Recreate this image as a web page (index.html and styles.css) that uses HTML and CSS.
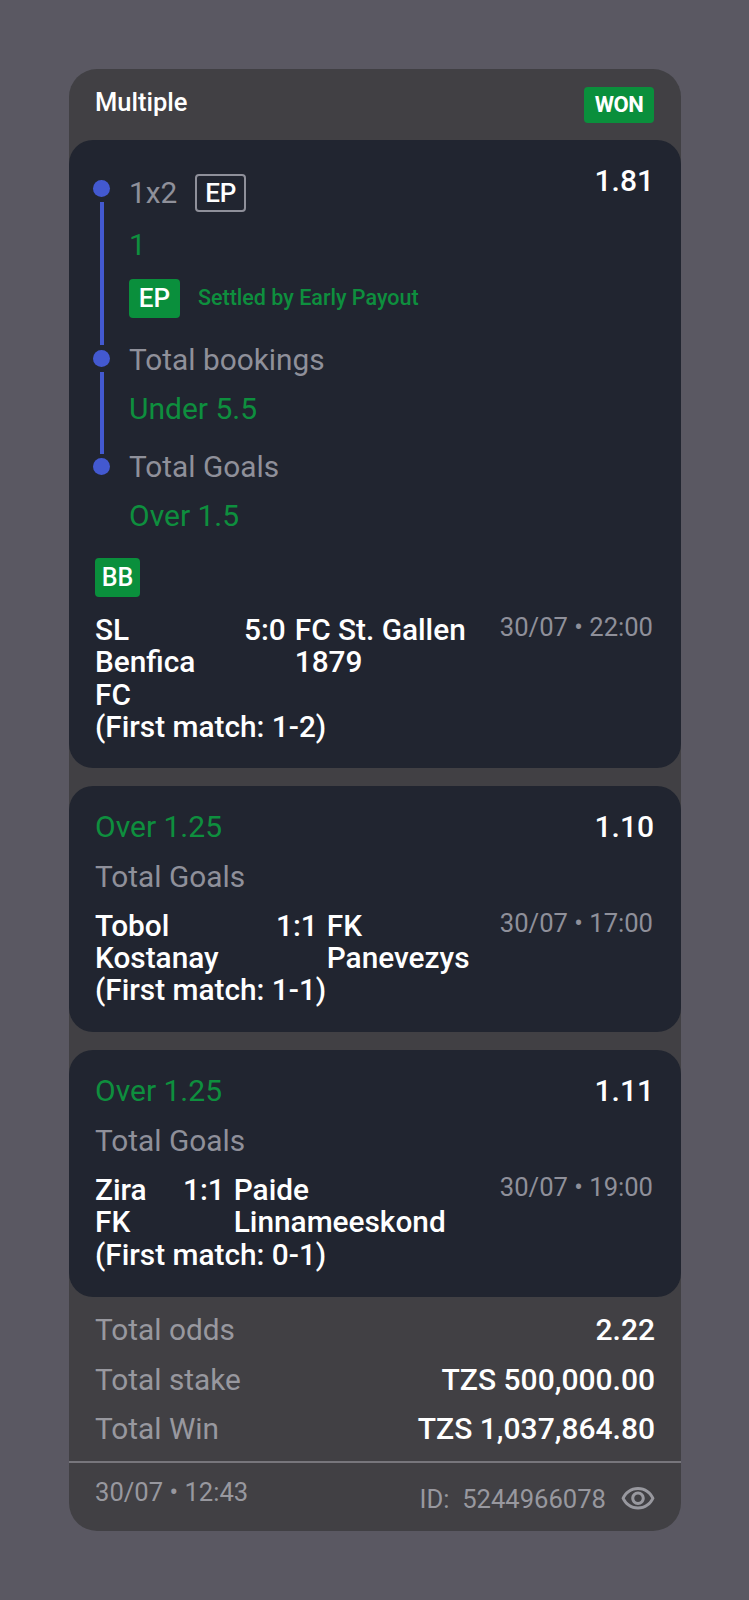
FILE: index.html
```html
<!DOCTYPE html>
<html lang="en">
<head>
    <meta charset="UTF-8">
    <meta name="viewport" content="width=device-width, initial-scale=1.0">
    <title>Multiple</title>
    <link rel="stylesheet" href="styles.css">
</head>
<body>
    <div class="ticket">
        <div class="ticket-head">
            <div class="ticket-title">Multiple</div>
            <div class="status">WON</div>
        </div>

        <div class="bets">
            <!-- Bet builder -->
            <div class="bet bet-builder">
                <div class="bet-top">
                    <div class="legs">
                        <div class="leg">
                            <div class="rail"><span class="dot"></span><span class="line line-first"></span></div>
                            <div class="leg-body">
                                <div class="market market-row">1x2 <span class="tag-outline">EP</span></div>
                                <div class="pick pick-first">1</div>
                                <div class="early">
                                    <span class="tag tag-ep">EP</span>
                                    <span class="early-text">Settled by Early Payout</span>
                                </div>
                            </div>
                        </div>
                        <div class="leg">
                            <div class="rail"><span class="dot"></span><span class="line"></span></div>
                            <div class="leg-body">
                                <div class="market">Total bookings</div>
                                <div class="pick">Under 5.5</div>
                            </div>
                        </div>
                        <div class="leg">
                            <div class="rail rail-last"><span class="dot"></span></div>
                            <div class="leg-body">
                                <div class="market">Total Goals</div>
                                <div class="pick">Over 1.5</div>
                            </div>
                        </div>
                    </div>
                    <div class="odds">1.81</div>
                </div>
                <span class="tag tag-bb">BB</span>
                <div class="match">
                    <div class="match-info">
                        <div class="teams">
                            <div class="home home-benfica"><span class="team">SL Benfica FC</span></div>
                            <div class="score">5:0</div>
                            <div class="team team-wide">FC St. Gallen 1879</div>
                        </div>
                        <div>(First match: 1-2)</div>
                    </div>
                    <div class="date">30/07 • 22:00</div>
                </div>
            </div>

            <div class="bet">
                <div class="bet-top">
                    <div class="pick pick-plain">Over 1.25</div>
                    <div class="odds">1.10</div>
                </div>
                <div class="market market-sub">Total Goals</div>
                <div class="match">
                    <div class="match-info">
                        <div class="teams">
                            <div class="home home-tobol"><span class="team">Tobol Kostanay</span></div>
                            <div class="score">1:1</div>
                            <div class="team">FK Panevezys</div>
                        </div>
                        <div>(First match: 1-1)</div>
                    </div>
                    <div class="date">30/07 • 17:00</div>
                </div>
            </div>

            <div class="bet">
                <div class="bet-top">
                    <div class="pick pick-plain">Over 1.25</div>
                    <div class="odds">1.11</div>
                </div>
                <div class="market market-sub">Total Goals</div>
                <div class="match">
                    <div class="match-info">
                        <div class="teams">
                            <div class="home home-zira"><span class="team">Zira FK</span></div>
                            <div class="score">1:1</div>
                            <div class="team">Paide Linnameeskond</div>
                        </div>
                        <div>(First match: 0-1)</div>
                    </div>
                    <div class="date">30/07 • 19:00</div>
                </div>
            </div>
        </div>

        <div class="totals">
            <div class="total-row"><span class="market">Total odds</span><span class="total-value">2.22</span></div>
            <div class="total-row"><span class="market">Total stake</span><span class="total-value">TZS 500,000.00</span></div>
            <div class="total-row"><span class="market">Total Win</span><span class="total-value">TZS 1,037,864.80</span></div>
        </div>

        <div class="ticket-foot">
            <div class="foot-date">30/07 • 12:43</div>
            <div class="foot-id">
                <span>ID:&nbsp; 5244966078</span>
                <svg class="eye" viewBox="0 0 24 24" width="36" height="36" fill="currentColor">
                    <path d="M12 6c3.79 0 7.17 2.13 8.82 5.5C19.17 14.87 15.79 17 12 17s-7.17-2.13-8.82-5.5C4.83 8.13 8.21 6 12 6m0-2C7 4 2.73 7.11 1 11.5 2.73 15.89 7 19 12 19s9.27-3.11 11-7.5C21.27 7.11 17 4 12 4zm0 5c1.38 0 2.5 1.12 2.5 2.5S13.38 14 12 14s-2.5-1.12-2.5-2.5S10.62 9 12 9m0-2c-2.48 0-4.5 2.02-4.5 4.5S9.52 16 12 16s4.5-2.02 4.5-4.5S14.48 7 12 7z"/>
                </svg>
            </div>
        </div>
    </div>
</body>
</html>
```

FILE: styles.css
```css
body {
    margin: 0;
    padding: 69px 68px 69px 69px;
    background-color: #5a5862;
    font-family: Roboto, "Liberation Sans", sans-serif;
    color: #fff;
}
.ticket {
    background: #414044;
    border-radius: 28px;
    overflow: hidden;
}
.ticket-head {
    display: flex;
    justify-content: space-between;
    align-items: center;
    height: 71px;
    padding: 0 27px 0 26px;
}
.ticket-title {
    font-size: 25.5px;
    font-weight: 500;
    margin-top: -5px;
}
.status {
    width: 70px;
    height: 36px;
    line-height: 36px;
    text-align: center;
    background: #0a8f3c;
    border-radius: 4px;
    font-size: 22px;
    font-weight: 700;
    letter-spacing: -0.5px;
}
.bets {
    display: flex;
    flex-direction: column;
    gap: 18px;
}
.bet {
    background: #212530;
    border-radius: 24px;
    padding: 25px 26px 25px;
}
.bet-builder {
    padding-bottom: 24px;
}
.bet:last-child {
    padding-bottom: 26px;
}
.bet-top {
    display: flex;
    justify-content: space-between;
    align-items: flex-start;
}
.legs {
    padding-top: 9px;
}
.leg {
    display: flex;
    margin-left: -2px;
    column-gap: 19px;
}
.rail {
    display: flex;
    flex-direction: column;
    align-items: center;
    width: 17px;
    padding-top: 6px;
}
.rail-last {
    padding-top: 7px;
}
.dot {
    width: 17px;
    height: 17px;
    flex: none;
    border-radius: 50%;
    background: #4359d0;
}
.line {
    width: 4px;
    flex: 1;
    margin: 5px 0 -3px;
    background: #4359d0;
}
.line-first {
    margin-bottom: -1px;
}
.market {
    font-size: 29.8px;
    line-height: 32px;
    color: #8f909a;
}
.market-row {
    display: flex;
    align-items: center;
    gap: 18px;
    height: 38px;
}
.market-sub {
    margin-top: 17px;
}
.tag-outline {
    box-sizing: border-box;
    width: 51px;
    height: 38px;
    line-height: 35px;
    text-align: center;
    border: 2px solid #8f909a;
    border-radius: 4px;
    color: #fff;
    font-size: 26px;
    font-weight: 500;
}
.pick {
    margin: 17px 0 26px;
    font-size: 30px;
    line-height: 32px;
    color: #0e8f3e;
}
.pick-first {
    margin-bottom: 18px;
}
.pick-plain {
    margin: 0 0 1px;
}
.early {
    display: flex;
    align-items: center;
    gap: 18px;
    margin-bottom: 26px;
}
.tag {
    display: block;
    height: 39px;
    line-height: 39px;
    text-align: center;
    background: #0a8f3c;
    border-radius: 4px;
    font-weight: 500;
}
.tag-ep {
    width: 51px;
    font-size: 26px;
}
.tag-bb {
    width: 45px;
    font-size: 25px;
}
.early-text {
    font-size: 21.5px;
    font-weight: 500;
    color: #0e8f3e;
    margin-top: -2px;
}
.odds {
    font-size: 30px;
    font-weight: 500;
    line-height: 32px;
    margin-right: 1px;
}
.match {
    display: flex;
    justify-content: space-between;
    align-items: flex-start;
    margin-top: 17px;
    font-size: 29.8px;
    font-weight: 500;
    line-height: 32.4px;
}
.teams {
    display: flex;
    column-gap: 9px;
}
.team {
    display: block;
    width: min-content;
}
.team-wide {
    width: 175px;
}
.home-benfica {
    width: 140px;
}
.home-tobol {
    width: 172px;
}
.home-zira {
    width: 79px;
}
.date {
    margin: -2px 2px 0 0;
    font-size: 25.6px;
    font-weight: 400;
    line-height: 30px;
    color: #8f909a;
}
.totals {
    padding: 17px 26px 16px;
    border-bottom: 2px solid #77767c;
}
.total-row {
    display: flex;
    justify-content: space-between;
    margin-bottom: 17.5px;
}
.total-row:last-child {
    margin-bottom: 0;
}
.total-row .market {
    color: #98989f;
}
.total-value {
    font-size: 30px;
    font-weight: 500;
    line-height: 32px;
}
.ticket-foot {
    display: flex;
    justify-content: space-between;
    align-items: flex-start;
    height: 68px;
    padding: 14px 26px 0;
    box-sizing: border-box;
    font-size: 25.6px;
    color: #98989f;
}
.foot-id {
    display: flex;
    align-items: center;
    gap: 14px;
    margin: 4px -1px 0 0;
}
```
